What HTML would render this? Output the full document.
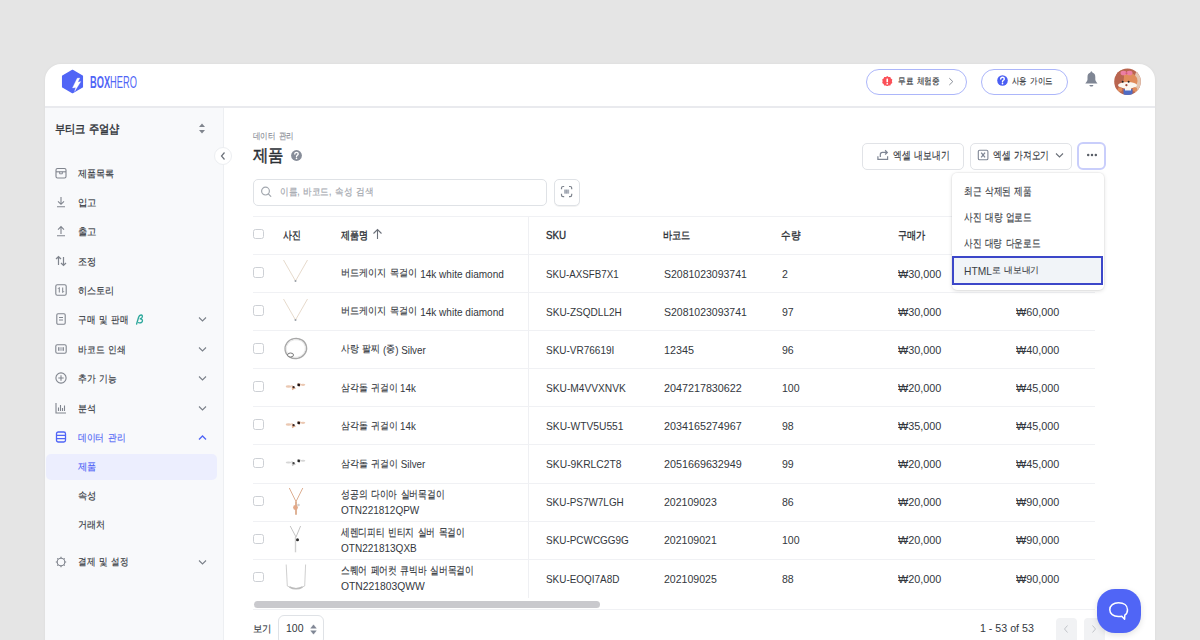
<!DOCTYPE html>
<html><head><meta charset="utf-8">
<style>
*{box-sizing:border-box;margin:0;padding:0}
html,body{width:1200px;height:640px;overflow:hidden;background:#e5e5e5;font-family:"Liberation Sans",sans-serif;color:#2f3338;position:relative}
.a{position:absolute}
.t{position:absolute;white-space:nowrap;line-height:16px;height:16px}
.pill{position:absolute;top:69px;height:26px;border:1.3px solid #acb6fa;border-radius:13px;background:#fff}
.btn{position:absolute;border:1px solid #e1e3e7;border-radius:5px;background:#fff}
.cb{position:absolute;width:10.5px;height:10.5px;border:1.3px solid #cdd0d5;border-radius:2.5px;background:#fff}
.hl{position:absolute;height:1px;background:#f0f1f4}
body.tofu .h{font-size:1.3em;position:relative;top:0.6px}
body.tofu .k{font-size:1.2em;top:0.4px}
.kk{-webkit-text-stroke:0.15px currentColor;word-spacing:1.5px;position:relative;top:-0.9px}
.k{font-size:0.9em;position:relative;top:-1.5px;-webkit-text-stroke:0.12px currentColor;word-spacing:1px}
</style></head><body>
<div class="a" style="left:45px;top:64px;width:1110px;height:620px;background:#fff;border-radius:16px;box-shadow:0 0 3px rgba(0,0,0,0.05)"></div>
<div class="a" style="left:45px;top:106px;width:1110px;height:2px;background:#e9eaee"></div>
<div class="a" style="left:45px;top:108px;width:179px;height:540px;background:#f8f9fb;border-right:1px solid #edeff2"></div>
<svg class="a" style="left:61px;top:69px" width="23" height="25" viewBox="0 0 23 25">
<polygon points="11.5,1.4 21.3,7.1 21.3,17.9 11.5,23.6 1.7,17.9 1.7,7.1" fill="#5065f6" stroke="#5065f6" stroke-linejoin="round" stroke-width="1.5"/>
<path d="M16.2 9.2 L18.8 9.0 L16.8 13.3 L19.8 12.6 L13.6 22.4 L14.7 18.4 L11.5 18.9 Z" fill="#fff" stroke="#fff" stroke-width="0.3" stroke-linejoin="round"/>
</svg>
<div class="t" style="left:90px;top:73.5px;font-size:17px;line-height:17px;height:17px;font-weight:bold;color:#5065f6;transform:scaleX(0.545);transform-origin:left top">BOX<span style="font-weight:normal">HERO</span></div>
<div class="pill" style="left:866px;width:101px"></div>
<svg class="a" style="left:882px;top:75.8px" width="10.5" height="10.5" viewBox="0 0 10.5 10.5"><polygon points="5.25,0 6.5,0.9 8.3,1 8.9,2.6 10.3,3.6 9.9,5.25 10.3,6.9 8.9,7.9 8.3,9.5 6.5,9.6 5.25,10.5 4,9.6 2.2,9.5 1.6,7.9 0.2,6.9 0.6,5.25 0.2,3.6 1.6,2.6 2.2,1 4,0.9" fill="#fb5058"/><rect x="4.45" y="2.6" width="1.6" height="3.6" rx="0.5" fill="#fff"/><rect x="4.45" y="7" width="1.6" height="1.4" rx="0.5" fill="#fff"/></svg>
<div class="t" id="k1" style="left:897.5px;top:74px;font-size:8.8px;color:#33373d;font-weight:normal;transform:scaleX(0.8437);transform-origin:left center;"><span><span class="kk h">무료 체험중</span></span></div>
<svg class="a" style="left:947px;top:77px" width="8" height="10" viewBox="0 0 8 10"><path d="M2.3 1.2 L5.8 4.6 L2.3 8" fill="none" stroke="#8a8f98" stroke-width="1"/></svg>
<div class="pill" style="left:981px;width:87px"></div>
<svg class="a" style="left:996.5px;top:75px" width="11" height="11" viewBox="0 0 11 11"><circle cx="5.5" cy="5.5" r="5.3" fill="#4a5ef3"/><path d="M3.7 4.1 C3.7 2.9 4.5 2.3 5.5 2.3 C6.6 2.3 7.3 3 7.3 3.9 C7.3 4.8 6.6 5.1 6.1 5.5 C5.6 5.9 5.5 6.2 5.5 6.9" fill="none" stroke="#fff" stroke-width="1.4" stroke-linecap="round"/><circle cx="5.5" cy="8.6" r="0.85" fill="#fff"/></svg>
<div class="t" id="k2" style="left:1012px;top:74px;font-size:8.8px;color:#33373d;font-weight:normal;transform:scaleX(0.8273);transform-origin:left center;"><span><span class="kk h">사용 가이드</span></span></div>
<svg class="a" style="left:1084px;top:70px" width="15" height="17" viewBox="0 0 15 17"><path d="M7.4 1.3 C6.8 1.3 6.6 2.2 6.4 2.6 C4.5 3.2 3.5 4.8 3.5 7 L3.5 9.5 C3.5 11 2.2 12.3 1.3 13.6 L13.5 13.6 C12.6 12.3 11.3 11 11.3 9.5 L11.3 7 C11.3 4.8 10.3 3.2 8.4 2.6 C8.2 2.2 8 1.3 7.4 1.3 Z" fill="#7f8694"/><path d="M5.4 15 L9.4 15 C9.2 16 8.4 16.6 7.4 16.6 C6.4 16.6 5.6 16 5.4 15 Z" fill="#7f8694"/></svg>
<svg class="a" style="left:1114px;top:68px" width="28" height="28" viewBox="0 0 28 28">
<defs><clipPath id="cc"><circle cx="13.5" cy="13.7" r="13.3"/></clipPath></defs>
<g clip-path="url(#cc)">
<rect width="28" height="28" fill="#b9654f"/>
<ellipse cx="25" cy="15" rx="5" ry="13" fill="#e3c6b2"/>
<ellipse cx="14" cy="13" rx="9.5" ry="8.5" fill="#e08c5c"/>
<ellipse cx="6" cy="9" rx="4" ry="7" fill="#b9654f"/>
<ellipse cx="13.5" cy="17.3" rx="9.5" ry="3.2" fill="#fbf6f0"/>
<circle cx="8.7" cy="13.8" r="1" fill="#222"/><circle cx="14.6" cy="13.8" r="1" fill="#222"/>
<circle cx="12.4" cy="17.2" r="1.1" fill="#a04838"/>
<rect x="9.5" y="21" width="9" height="8" fill="#4f6cc4"/>
<rect x="11" y="20" width="6" height="2.5" fill="#fbf6f0"/>
<circle cx="6" cy="21.5" r="2.3" fill="#e08c5c"/><circle cx="21" cy="21.5" r="2.3" fill="#e08c5c"/>
<ellipse cx="9.5" cy="5" rx="3" ry="2.3" fill="#ec7ea2"/><ellipse cx="15.5" cy="5" rx="3" ry="2.3" fill="#ec7ea2"/>
<circle cx="12.5" cy="5.2" r="1" fill="#d05a80"/>
</g></svg>
<div class="t" id="k3" style="left:54.5px;top:121px;font-size:12px;color:#2b2f35;font-weight:500;transform:scaleX(0.8534);transform-origin:left center;-webkit-text-stroke:0.4px #2b2f35"><span><span class="h">부티크 주얼샵</span></span></div>
<svg class="a" style="left:198px;top:123px" width="8" height="11" viewBox="0 0 8 11"><path d="M4 0.5 L7 4 L1 4 Z M4 10.5 L7 7 L1 7 Z" fill="#80858e"/></svg>
<div class="a" style="left:214px;top:147px;width:18px;height:18px;border-radius:9px;background:#fff;border:1px solid #eceef1"></div>
<svg class="a" style="left:219px;top:151px" width="8" height="10" viewBox="0 0 8 10"><path d="M5.5 1.5 L2.5 5 L5.5 8.5" fill="none" stroke="#6b7079" stroke-width="1.2"/></svg>
<svg class="a" style="left:54.5px;top:167px" width="12" height="12" viewBox="0 0 12 12"><rect x="1" y="1.5" width="10" height="9.5" rx="1.5" fill="none" stroke="#80858e" stroke-width="1.1"/><path d="M1 4.8 L11 4.8" stroke="#80858e" stroke-width="1.1"/><path d="M4.6 4.8 L4.6 6.8 L7.4 6.8 L7.4 4.8" fill="none" stroke="#80858e" stroke-width="0.9"/></svg>
<div class="t" id="k4" style="left:78px;top:166.5px;font-size:10px;color:#33373d;font-weight:normal;transform:scaleX(0.9075);transform-origin:left center;"><span><span class="kk h">제품목록</span></span></div>
<svg class="a" style="left:54.5px;top:196px" width="12" height="12" viewBox="0 0 12 12"><path d="M6 1 L6 8.3 M3 5.3 L6 8.3 L9 5.3 M2 10.8 L10 10.8" fill="none" stroke="#80858e" stroke-width="1.1"/></svg>
<div class="t" id="k5" style="left:78px;top:195.5px;font-size:10px;color:#33373d;font-weight:normal;transform:scaleX(0.9400);transform-origin:left center;"><span><span class="kk h">입고</span></span></div>
<svg class="a" style="left:54.5px;top:225px" width="12" height="12" viewBox="0 0 12 12"><path d="M6 9 L6 1.6 M3 4.6 L6 1.6 L9 4.6 M2 10.8 L10 10.8" fill="none" stroke="#80858e" stroke-width="1.1"/></svg>
<div class="t" id="k6" style="left:78px;top:224.5px;font-size:10px;color:#33373d;font-weight:normal;transform:scaleX(0.9400);transform-origin:left center;"><span><span class="kk h">출고</span></span></div>
<svg class="a" style="left:54.5px;top:255px" width="12" height="12" viewBox="0 0 12 12"><path d="M3.5 10 L3.5 1.5 M1 4 L3.5 1.5 L6 4 M8.5 2 L8.5 10.5 M6 8 L8.5 10.5 L11 8" fill="none" stroke="#80858e" stroke-width="1.2"/></svg>
<div class="t" id="k7" style="left:78px;top:254.5px;font-size:10px;color:#33373d;font-weight:normal;transform:scaleX(0.9150);transform-origin:left center;"><span><span class="kk h">조정</span></span></div>
<svg class="a" style="left:54.5px;top:284px" width="12" height="12" viewBox="0 0 12 12"><rect x="0.8" y="0.8" width="10.4" height="10.4" rx="1.5" fill="none" stroke="#80858e" stroke-width="1.1"/><path d="M4.3 8.5 L4.3 3.5 M3 4.8 L4.3 3.5 M7.7 3.5 L7.7 8.5 L9 7.2" fill="none" stroke="#80858e" stroke-width="1"/></svg>
<div class="t" id="k8" style="left:78px;top:283.5px;font-size:10px;color:#33373d;font-weight:normal;transform:scaleX(0.9075);transform-origin:left center;"><span><span class="kk h">히스토리</span></span></div>
<svg class="a" style="left:54.5px;top:313px" width="12" height="12" viewBox="0 0 12 12"><rect x="1.8" y="0.8" width="8.4" height="10.4" rx="1.2" fill="none" stroke="#80858e" stroke-width="1.1"/><path d="M4 4.5 L8 4.5 M4 7 L8 7" stroke="#80858e" stroke-width="1"/></svg>
<div class="t" id="k9" style="left:78px;top:312.5px;font-size:10px;color:#33373d;font-weight:normal;transform:scaleX(0.8555);transform-origin:left center;"><span><span class="kk h">구매 및 판매</span></span></div>
<svg class="a" style="left:198px;top:316.2px" width="9" height="7" viewBox="0 0 9 7"><path d="M1 1.5 L4.5 5 L8 1.5" fill="none" stroke="#7b8089" stroke-width="1.1"/></svg>
<svg class="a" style="left:54.5px;top:343px" width="12" height="12" viewBox="0 0 12 12"><rect x="0.8" y="1.8" width="10.4" height="8.4" rx="1.5" fill="none" stroke="#80858e" stroke-width="1.1"/><path d="M3.5 4.2 L3.5 7.8 M5 4.2 L5 7.8 M7 4.2 L7 7.8 M8.5 4.2 L8.5 7.8" stroke="#80858e" stroke-width="0.9"/></svg>
<div class="t" id="k10" style="left:78px;top:342.5px;font-size:10px;color:#33373d;font-weight:normal;transform:scaleX(0.8806);transform-origin:left center;"><span><span class="kk h">바코드 인쇄</span></span></div>
<svg class="a" style="left:198px;top:346.2px" width="9" height="7" viewBox="0 0 9 7"><path d="M1 1.5 L4.5 5 L8 1.5" fill="none" stroke="#7b8089" stroke-width="1.1"/></svg>
<svg class="a" style="left:54.5px;top:372px" width="12" height="12" viewBox="0 0 12 12"><circle cx="6" cy="6" r="5.1" fill="none" stroke="#80858e" stroke-width="1.1"/><path d="M6 3.3 L6 8.7 M3.3 6 L8.7 6" stroke="#80858e" stroke-width="1.1"/></svg>
<div class="t" id="k11" style="left:78px;top:371.5px;font-size:10px;color:#33373d;font-weight:normal;transform:scaleX(0.8762);transform-origin:left center;"><span><span class="kk h">추가 기능</span></span></div>
<svg class="a" style="left:198px;top:375.2px" width="9" height="7" viewBox="0 0 9 7"><path d="M1 1.5 L4.5 5 L8 1.5" fill="none" stroke="#7b8089" stroke-width="1.1"/></svg>
<svg class="a" style="left:54.5px;top:402px" width="12" height="12" viewBox="0 0 12 12"><path d="M1 1 L1 11 L11 11 M3.5 9 L3.5 5.5 M5.5 9 L5.5 3 M7.5 9 L7.5 6 M9.5 9 L9.5 3.5" fill="none" stroke="#80858e" stroke-width="1.1"/></svg>
<div class="t" id="k12" style="left:78px;top:401.5px;font-size:10px;color:#33373d;font-weight:normal;transform:scaleX(0.9000);transform-origin:left center;"><span><span class="kk h">분석</span></span></div>
<svg class="a" style="left:198px;top:405.2px" width="9" height="7" viewBox="0 0 9 7"><path d="M1 1.5 L4.5 5 L8 1.5" fill="none" stroke="#7b8089" stroke-width="1.1"/></svg>
<svg class="a" style="left:54.5px;top:431px" width="12" height="12" viewBox="0 0 12 12"><rect x="1.5" y="1" width="9" height="10" rx="1.8" fill="none" stroke="#5065f6" stroke-width="1.3"/><path d="M1.5 4.3 L10.5 4.3 M1.5 7.6 L10.5 7.6" stroke="#5065f6" stroke-width="1.3"/></svg>
<div class="t" id="k13" style="left:78px;top:430.5px;font-size:10px;color:#5065f6;font-weight:normal;transform:scaleX(0.8714);transform-origin:left center;"><span><span class="kk h">데이터 관리</span></span></div>
<svg class="a" style="left:198px;top:434px" width="9" height="7" viewBox="0 0 9 7"><path d="M1 5.5 L4.5 2 L8 5.5" fill="none" stroke="#5065f6" stroke-width="1.3"/></svg>
<svg class="a" style="left:54.5px;top:555.5px" width="12" height="12" viewBox="0 0 12 12"><circle cx="6" cy="6" r="3.8" fill="none" stroke="#80858e" stroke-width="1.1"/><path d="M6 0.8 L6 2.2 M6 9.8 L6 11.2 M0.8 6 L2.2 6 M9.8 6 L11.2 6 M2.3 2.3 L3.3 3.3 M8.7 8.7 L9.7 9.7 M2.3 9.7 L3.3 8.7 M8.7 3.3 L9.7 2.3" stroke="#80858e" stroke-width="1.2"/></svg>
<div class="t" id="k14" style="left:78px;top:555.0px;font-size:10px;color:#33373d;font-weight:normal;transform:scaleX(0.8589);transform-origin:left center;"><span><span class="kk h">결제 및 설정</span></span></div>
<svg class="a" style="left:198px;top:558.7px" width="9" height="7" viewBox="0 0 9 7"><path d="M1 1.5 L4.5 5 L8 1.5" fill="none" stroke="#7b8089" stroke-width="1.1"/></svg>
<svg class="a" style="left:135px;top:313.5px" width="10" height="11" viewBox="0 0 10 11"><path d="M1.6 10 L3.6 3.2 C4.1 1.5 5.2 0.9 6.3 1 C7.6 1.2 7.8 2.8 6.6 4 L5.2 4.9 C7 5 7.8 6 7.3 7.4 C6.8 8.8 5.2 9.2 3.6 8.6" fill="none" stroke="#2ea89c" stroke-width="1.35" stroke-linecap="round" stroke-linejoin="round"/></svg>
<div class="a" style="left:46px;top:454px;width:171px;height:26px;border-radius:5px;background:#eceefe"></div>
<div class="t" id="k15" style="left:78px;top:459.8px;font-size:10px;color:#5065f6;font-weight:normal;transform:scaleX(0.9200);transform-origin:left center;"><span><span class="kk h">제품</span></span></div>
<div class="t" id="k16" style="left:78px;top:488.8px;font-size:10px;color:#33373d;font-weight:normal;transform:scaleX(0.9200);transform-origin:left center;"><span><span class="kk h">속성</span></span></div>
<div class="t" id="k17" style="left:78px;top:518.2px;font-size:10px;color:#33373d;font-weight:normal;transform:scaleX(0.9000);transform-origin:left center;"><span><span class="kk h">거래처</span></span></div>
<div class="t" id="k18" style="left:252.6px;top:129px;font-size:9px;color:#8b9098;font-weight:normal;transform:scaleX(0.8324);transform-origin:left center;"><span><span class="kk h">데이터 관리</span></span></div>
<div class="t" id="k19" style="left:252.6px;top:147.5px;font-size:17px;color:#2b2f35;font-weight:500;transform:scaleX(0.9059);transform-origin:left center;line-height:20px;height:20px;top:145.5px;-webkit-text-stroke:0.5px #2b2f35"><span><span class="h">제품</span></span></div>
<svg class="a" style="left:290.8px;top:150.2px" width="11" height="11" viewBox="0 0 11 11"><circle cx="5.5" cy="5.5" r="5.4" fill="#878d99"/><path d="M3.8 4.1 C3.8 3 4.6 2.4 5.5 2.4 C6.5 2.4 7.2 3 7.2 3.9 C7.2 4.7 6.6 5 6.1 5.4 C5.6 5.8 5.5 6.1 5.5 6.8" fill="none" stroke="#fff" stroke-width="1.3" stroke-linecap="round"/><circle cx="5.5" cy="8.5" r="0.8" fill="#fff"/></svg>
<div class="btn" style="left:253px;top:179px;width:294px;height:27px;border-color:#dfe2e6"></div>
<svg class="a" style="left:260px;top:186px" width="13" height="13" viewBox="0 0 13 13"><circle cx="5.5" cy="5.1" r="3.9" fill="none" stroke="#a3a8af" stroke-width="1.2"/><path d="M8.3 7.9 L10.8 10.4" stroke="#a3a8af" stroke-width="1.2" stroke-linecap="round"/></svg>
<div class="t" id="k20" style="left:279.6px;top:185px;font-size:10px;color:#a0a4ab;font-weight:normal;transform:scaleX(0.8597);transform-origin:left center;"><span><span class="kk h">이름, 바코드, 속성 검색</span></span></div>
<div class="btn" style="left:553.5px;top:179px;width:26.5px;height:26.5px;border-color:#dfe2e6;box-shadow:0 1px 0.5px rgba(0,0,0,0.05)"></div>
<svg class="a" style="left:560px;top:185px" width="14" height="13" viewBox="0 0 14 13"><path d="M1.5 4.2 L1.5 3 Q1.5 1.5 3 1.5 L4.2 1.5 M9 1.5 L10.2 1.5 Q11.7 1.5 11.7 3 L11.7 4.2 M11.7 8.8 L11.7 10 Q11.7 11.6 10.2 11.6 L9 11.6 M4.2 11.6 L3 11.6 Q1.5 11.6 1.5 10 L1.5 8.8" fill="none" stroke="#7c828c" stroke-width="1.2"/><rect x="4" y="4.6" width="5.2" height="4" fill="#c3c8d1"/><path d="M5.1 4.6 L5.1 8.6 M6.6 4.6 L6.6 8.6 M8.1 4.6 L8.1 8.6" stroke="#7f8591" stroke-width="0.6"/></svg>
<div class="btn" style="left:862px;top:143px;width:102px;height:27px"></div>
<svg class="a" style="left:876px;top:149px" width="13" height="13" viewBox="0 0 13 13"><path d="M1.9 7.2 L1.9 10.4 L11.6 10.4 L11.6 7.2" fill="none" stroke="#7f8694" stroke-width="1.2"/><path d="M4.3 8 L4.3 5.5 Q4.3 3.4 6.4 3.4 L11.2 3.4 M9.1 1.3 L11.3 3.4 L9.1 5.5" fill="none" stroke="#7f8694" stroke-width="1.2"/></svg>
<div class="t" id="k21" style="left:893px;top:147.8px;font-size:10.5px;color:#33373d;font-weight:normal;transform:scaleX(0.7995);transform-origin:left center;"><span><span class="kk h">엑셀 내보내기</span></span></div>
<div class="btn" style="left:970px;top:143px;width:102px;height:27px"></div>
<svg class="a" style="left:977px;top:149px" width="12" height="12" viewBox="0 0 12 12"><rect x="1.3" y="1.3" width="9.6" height="9.4" rx="1.3" fill="none" stroke="#7f8694" stroke-width="1.1"/><path d="M4.2 3.6 L8 8.4 M8 3.6 L4.2 8.4" stroke="#7f8694" stroke-width="1.3"/></svg>
<div class="t" id="k22" style="left:993.3px;top:147.8px;font-size:10.5px;color:#33373d;font-weight:normal;transform:scaleX(0.7952);transform-origin:left center;"><span><span class="kk h">엑셀 가져오기</span></span></div>
<svg class="a" style="left:1055px;top:152px" width="9" height="7" viewBox="0 0 9 7"><path d="M1 1.5 L4.5 5 L8 1.5" fill="none" stroke="#6b7079" stroke-width="1.1"/></svg>
<div class="btn" style="left:1077px;top:141.8px;width:28.5px;height:28.3px;border:2px solid #c9cefb;border-radius:6px"></div>
<svg class="a" style="left:1085.5px;top:152.6px" width="12" height="4" viewBox="0 0 12 4"><circle cx="2.2" cy="2" r="1.25" fill="#5a5f68"/><circle cx="6" cy="2" r="1.25" fill="#5a5f68"/><circle cx="9.8" cy="2" r="1.25" fill="#5a5f68"/></svg>
<div class="hl" style="left:253px;top:216px;width:842px"></div>
<div class="hl" style="left:253px;top:254px;width:842px"></div>
<div class="a" style="left:528px;top:217px;width:1px;height:381px;background:#eff0f3"></div>
<div class="cb" style="left:253.3px;top:228.5px"></div>
<div class="t" id="k23" style="left:282.5px;top:227px;font-size:10.5px;color:#2b2f35;font-weight:500;transform:scaleX(0.8091);transform-origin:left center;-webkit-text-stroke:0.35px #2b2f35"><span><span class="h">사진</span></span></div>
<div class="t" id="k24" style="left:340.75px;top:227px;font-size:10.5px;color:#2b2f35;font-weight:500;transform:scaleX(0.8197);transform-origin:left center;-webkit-text-stroke:0.35px #2b2f35"><span><span class="h">제품명</span></span></div>
<div class="t" id="k25" style="left:546.2px;top:227px;font-size:10.5px;color:#2b2f35;font-weight:500;transform:scaleX(0.9308);transform-origin:left center;-webkit-text-stroke:0.35px #2b2f35"><span>SKU</span></div>
<div class="t" id="k26" style="left:663.3px;top:227px;font-size:10.5px;color:#2b2f35;font-weight:500;transform:scaleX(0.8333);transform-origin:left center;-webkit-text-stroke:0.35px #2b2f35"><span><span class="h">바코드</span></span></div>
<div class="t" id="k27" style="left:780.7px;top:227px;font-size:10.5px;color:#2b2f35;font-weight:500;transform:scaleX(0.8682);transform-origin:left center;-webkit-text-stroke:0.35px #2b2f35"><span><span class="h">수량</span></span></div>
<div class="t" id="k28" style="left:898.3px;top:227px;font-size:10.5px;color:#2b2f35;font-weight:500;transform:scaleX(0.8333);transform-origin:left center;-webkit-text-stroke:0.35px #2b2f35"><span><span class="h">구매가</span></span></div>
<div class="t" id="k29" style="left:1016px;top:227px;font-size:10.5px;color:#2b2f35;font-weight:500;transform:scaleX(0.8333);transform-origin:left center;-webkit-text-stroke:0.35px #2b2f35"><span><span class="h">판매가</span></span></div>
<svg class="a" style="left:372px;top:228px" width="11" height="12" viewBox="0 0 11 12"><path d="M5.5 11 L5.5 1.5 M1.5 5.5 L5.5 1.5 L9.5 5.5" fill="none" stroke="#6b7079" stroke-width="1.1"/></svg>
<div class="hl" style="left:253px;top:292px;width:842px"></div>
<div class="cb" style="left:253.3px;top:267.0px"></div>
<svg class="a" style="left:283px;top:259.4px" width="26" height="26" viewBox="0 0 26 26"><path d="M0.5 1 L12.5 22 L24.5 1" fill="none" stroke="#e3d6c6" stroke-width="0.9"/><circle cx="12.5" cy="22" r="1" fill="#9aa0a8"/></svg>
<div class="t" id="k30" style="left:340.5px;top:265.7px;font-size:11px;color:#33373d;font-weight:normal;transform:scaleX(0.9119);transform-origin:left center;"><span><span class="k h">버드케이지 목걸이</span> 14k white diamond</span></div>
<div class="t" id="k31" style="left:546.3px;top:265.7px;font-size:11px;color:#33373d;font-weight:normal;transform:scaleX(0.8856);transform-origin:left center;"><span>SKU-AXSFB7X1</span></div>
<div class="t" id="k32" style="left:663.75px;top:265.7px;font-size:11px;color:#33373d;font-weight:normal;transform:scaleX(0.9531);transform-origin:left center;"><span>S2081023093741</span></div>
<div class="t" id="k33" style="left:781.5px;top:265.7px;font-size:11px;color:#33373d;font-weight:normal;transform:scaleX(0.9584);transform-origin:left center;"><span>2</span></div>
<div class="t" id="k34" style="left:898.3px;top:265.7px;font-size:11px;color:#33373d;font-weight:normal;transform:scaleX(0.9834);transform-origin:left center;"><span>₩30,000</span></div>
<div class="t" id="k35" style="left:1015.8px;top:265.7px;font-size:11px;color:#33373d;font-weight:normal;transform:scaleX(0.9834);transform-origin:left center;"><span>₩60,000</span></div>
<div class="hl" style="left:253px;top:330px;width:842px"></div>
<div class="cb" style="left:253.3px;top:305.1px"></div>
<svg class="a" style="left:283px;top:297.5px" width="26" height="26" viewBox="0 0 26 26"><path d="M0.5 1 L12.5 22 L24.5 1" fill="none" stroke="#e3d6c6" stroke-width="0.9"/><circle cx="12.5" cy="22" r="1" fill="#9aa0a8"/></svg>
<div class="t" id="k36" style="left:340.5px;top:303.8px;font-size:11px;color:#33373d;font-weight:normal;transform:scaleX(0.9119);transform-origin:left center;"><span><span class="k h">버드케이지 목걸이</span> 14k white diamond</span></div>
<div class="t" id="k37" style="left:546.3px;top:303.8px;font-size:11px;color:#33373d;font-weight:normal;transform:scaleX(0.9117);transform-origin:left center;"><span>SKU-ZSQDLL2H</span></div>
<div class="t" id="k38" style="left:663.75px;top:303.8px;font-size:11px;color:#33373d;font-weight:normal;transform:scaleX(0.9531);transform-origin:left center;"><span>S2081023093741</span></div>
<div class="t" id="k39" style="left:781.5px;top:303.8px;font-size:11px;color:#33373d;font-weight:normal;transform:scaleX(0.9584);transform-origin:left center;"><span>97</span></div>
<div class="t" id="k40" style="left:898.3px;top:303.8px;font-size:11px;color:#33373d;font-weight:normal;transform:scaleX(0.9834);transform-origin:left center;"><span>₩30,000</span></div>
<div class="t" id="k41" style="left:1015.8px;top:303.8px;font-size:11px;color:#33373d;font-weight:normal;transform:scaleX(0.9834);transform-origin:left center;"><span>₩60,000</span></div>
<div class="hl" style="left:253px;top:368px;width:842px"></div>
<div class="cb" style="left:253.3px;top:343.2px"></div>
<svg class="a" style="left:283px;top:335.6px" width="26" height="26" viewBox="0 0 26 26"><ellipse cx="12.8" cy="12.5" rx="10.8" ry="10" fill="none" stroke="#a8a8a8" stroke-width="1.4" transform="rotate(-10 12.8 12.5)"/><ellipse cx="12.8" cy="12.5" rx="9.6" ry="8.8" fill="none" stroke="#e4e4e4" stroke-width="0.8" transform="rotate(-10 12.8 12.5)"/><ellipse cx="7.5" cy="19" rx="3" ry="2" fill="#fff" stroke="#777" stroke-width="1"/></svg>
<div class="t" id="k42" style="left:340.5px;top:341.9px;font-size:11px;color:#33373d;font-weight:normal;transform:scaleX(0.8953);transform-origin:left center;"><span><span class="k h">사랑 팔찌</span> (<span class="k h">중</span>) Silver</span></div>
<div class="t" id="k43" style="left:546.3px;top:341.9px;font-size:11px;color:#33373d;font-weight:normal;transform:scaleX(0.9080);transform-origin:left center;"><span>SKU-VR76619I</span></div>
<div class="t" id="k44" style="left:663.75px;top:341.9px;font-size:11px;color:#33373d;font-weight:normal;transform:scaleX(0.9806);transform-origin:left center;"><span>12345</span></div>
<div class="t" id="k45" style="left:781.5px;top:341.9px;font-size:11px;color:#33373d;font-weight:normal;transform:scaleX(0.9584);transform-origin:left center;"><span>96</span></div>
<div class="t" id="k46" style="left:898.3px;top:341.9px;font-size:11px;color:#33373d;font-weight:normal;transform:scaleX(0.9834);transform-origin:left center;"><span>₩30,000</span></div>
<div class="t" id="k47" style="left:1015.8px;top:341.9px;font-size:11px;color:#33373d;font-weight:normal;transform:scaleX(0.9834);transform-origin:left center;"><span>₩40,000</span></div>
<div class="hl" style="left:253px;top:406px;width:842px"></div>
<div class="cb" style="left:253.3px;top:381.3px"></div>
<svg class="a" style="left:283px;top:373.70000000000005px" width="26" height="26" viewBox="0 0 26 26"><ellipse cx="5.5" cy="12.5" rx="2.8" ry="1.2" fill="#ebc8b2"/><polygon points="8.5,10.8 13,14.3 9,16.3" fill="#e3b497"/><circle cx="10.6" cy="13.2" r="1.1" fill="#3a2a2a"/><polygon points="14,9.3 18,9.8 16.5,13.3" fill="#e3b497"/><circle cx="15.7" cy="10.9" r="1.4" fill="#1e1414"/><ellipse cx="20" cy="10.8" rx="2.3" ry="1.1" fill="#ebc8b2"/></svg>
<div class="t" id="k48" style="left:340.5px;top:380.0px;font-size:11px;color:#33373d;font-weight:normal;transform:scaleX(0.8847);transform-origin:left center;"><span><span class="k h">삼각돌 귀걸이</span> 14k</span></div>
<div class="t" id="k49" style="left:546.3px;top:380.0px;font-size:11px;color:#33373d;font-weight:normal;transform:scaleX(0.9257);transform-origin:left center;"><span>SKU-M4VVXNVK</span></div>
<div class="t" id="k50" style="left:663.75px;top:380.0px;font-size:11px;color:#33373d;font-weight:normal;transform:scaleX(0.9782);transform-origin:left center;"><span>2047217830622</span></div>
<div class="t" id="k51" style="left:781.5px;top:380.0px;font-size:11px;color:#33373d;font-weight:normal;transform:scaleX(0.9584);transform-origin:left center;"><span>100</span></div>
<div class="t" id="k52" style="left:898.3px;top:380.0px;font-size:11px;color:#33373d;font-weight:normal;transform:scaleX(0.9834);transform-origin:left center;"><span>₩20,000</span></div>
<div class="t" id="k53" style="left:1015.8px;top:380.0px;font-size:11px;color:#33373d;font-weight:normal;transform:scaleX(0.9834);transform-origin:left center;"><span>₩45,000</span></div>
<div class="hl" style="left:253px;top:444px;width:842px"></div>
<div class="cb" style="left:253.3px;top:419.40000000000003px"></div>
<svg class="a" style="left:283px;top:411.8px" width="26" height="26" viewBox="0 0 26 26"><ellipse cx="5.5" cy="12.5" rx="2.8" ry="1.2" fill="#ebc8b2"/><polygon points="8.5,10.8 13,14.3 9,16.3" fill="#e3b497"/><circle cx="10.6" cy="13.2" r="1.1" fill="#3a2a2a"/><polygon points="14,9.3 18,9.8 16.5,13.3" fill="#e3b497"/><circle cx="15.7" cy="10.9" r="1.4" fill="#1e1414"/><ellipse cx="20" cy="10.8" rx="2.3" ry="1.1" fill="#ebc8b2"/></svg>
<div class="t" id="k54" style="left:340.5px;top:418.1px;font-size:11px;color:#33373d;font-weight:normal;transform:scaleX(0.8847);transform-origin:left center;"><span><span class="k h">삼각돌 귀걸이</span> 14k</span></div>
<div class="t" id="k55" style="left:546.3px;top:418.1px;font-size:11px;color:#33373d;font-weight:normal;transform:scaleX(0.9322);transform-origin:left center;"><span>SKU-WTV5U551</span></div>
<div class="t" id="k56" style="left:663.75px;top:418.1px;font-size:11px;color:#33373d;font-weight:normal;transform:scaleX(0.9782);transform-origin:left center;"><span>2034165274967</span></div>
<div class="t" id="k57" style="left:781.5px;top:418.1px;font-size:11px;color:#33373d;font-weight:normal;transform:scaleX(0.9584);transform-origin:left center;"><span>98</span></div>
<div class="t" id="k58" style="left:898.3px;top:418.1px;font-size:11px;color:#33373d;font-weight:normal;transform:scaleX(0.9834);transform-origin:left center;"><span>₩35,000</span></div>
<div class="t" id="k59" style="left:1015.8px;top:418.1px;font-size:11px;color:#33373d;font-weight:normal;transform:scaleX(0.9834);transform-origin:left center;"><span>₩45,000</span></div>
<div class="hl" style="left:253px;top:483px;width:842px"></div>
<div class="cb" style="left:253.3px;top:457.5px"></div>
<svg class="a" style="left:283px;top:449.9px" width="26" height="26" viewBox="0 0 26 26"><ellipse cx="5.5" cy="12.5" rx="2.8" ry="1.1" fill="#d6d6d6"/><polygon points="8.5,10.8 13,14.3 9,16.3" fill="#c8c8c8"/><circle cx="10.6" cy="13.2" r="1.1" fill="#444"/><polygon points="14,9.3 18,9.8 16.5,13.3" fill="#c8c8c8"/><circle cx="15.7" cy="10.9" r="1.3" fill="#222"/><ellipse cx="20" cy="10.8" rx="2.3" ry="1" fill="#d6d6d6"/></svg>
<div class="t" id="k60" style="left:340.5px;top:456.2px;font-size:11px;color:#33373d;font-weight:normal;transform:scaleX(0.8938);transform-origin:left center;"><span><span class="k h">삼각돌 귀걸이</span> Silver</span></div>
<div class="t" id="k61" style="left:546.3px;top:456.2px;font-size:11px;color:#33373d;font-weight:normal;transform:scaleX(0.9355);transform-origin:left center;"><span>SKU-9KRLC2T8</span></div>
<div class="t" id="k62" style="left:663.75px;top:456.2px;font-size:11px;color:#33373d;font-weight:normal;transform:scaleX(0.9782);transform-origin:left center;"><span>2051669632949</span></div>
<div class="t" id="k63" style="left:781.5px;top:456.2px;font-size:11px;color:#33373d;font-weight:normal;transform:scaleX(0.9584);transform-origin:left center;"><span>99</span></div>
<div class="t" id="k64" style="left:898.3px;top:456.2px;font-size:11px;color:#33373d;font-weight:normal;transform:scaleX(0.9834);transform-origin:left center;"><span>₩20,000</span></div>
<div class="t" id="k65" style="left:1015.8px;top:456.2px;font-size:11px;color:#33373d;font-weight:normal;transform:scaleX(0.9834);transform-origin:left center;"><span>₩45,000</span></div>
<div class="hl" style="left:253px;top:521px;width:842px"></div>
<div class="cb" style="left:253.3px;top:495.6px"></div>
<svg class="a" style="left:283px;top:485.0px" width="26" height="32" viewBox="0 0 26 32"><path d="M6.3 3 L13 16.6 L19.8 3" fill="none" stroke="#d9a585" stroke-width="0.9"/><path d="M13 16.6 L13 29.8" stroke="#d49a75" stroke-width="1.5"/><circle cx="12.5" cy="22.5" r="2.4" fill="#e2a888"/><circle cx="15.5" cy="20" r="1.3" fill="#d0d0d0"/></svg>
<div class="t" id="k66" style="left:340.5px;top:486.5px;font-size:10.5px;color:#33373d;font-weight:normal;transform:scaleX(0.7971);transform-origin:left center;"><span><span class="kk h">성공의 다이아 실버목걸이</span></span></div>
<div class="t" id="k67" style="left:340.5px;top:501.8px;font-size:11px;color:#33373d;font-weight:normal;transform:scaleX(0.9083);transform-origin:left center;"><span>OTN221812QPW</span></div>
<div class="t" id="k68" style="left:546.3px;top:494.3px;font-size:11px;color:#33373d;font-weight:normal;transform:scaleX(0.9025);transform-origin:left center;"><span>SKU-PS7W7LGH</span></div>
<div class="t" id="k69" style="left:663.75px;top:494.3px;font-size:11px;color:#33373d;font-weight:normal;transform:scaleX(0.9584);transform-origin:left center;"><span>202109023</span></div>
<div class="t" id="k70" style="left:781.5px;top:494.3px;font-size:11px;color:#33373d;font-weight:normal;transform:scaleX(0.9584);transform-origin:left center;"><span>86</span></div>
<div class="t" id="k71" style="left:898.3px;top:494.3px;font-size:11px;color:#33373d;font-weight:normal;transform:scaleX(0.9834);transform-origin:left center;"><span>₩20,000</span></div>
<div class="t" id="k72" style="left:1015.8px;top:494.3px;font-size:11px;color:#33373d;font-weight:normal;transform:scaleX(0.9834);transform-origin:left center;"><span>₩90,000</span></div>
<div class="hl" style="left:253px;top:559px;width:842px"></div>
<div class="cb" style="left:253.3px;top:533.6999999999999px"></div>
<svg class="a" style="left:283px;top:523.1px" width="26" height="32" viewBox="0 0 26 32"><path d="M7.2 3 L13 14 L17.6 3" fill="none" stroke="#bdbdbd" stroke-width="0.9"/><path d="M12.5 14 L12.5 29.3" stroke="#cfcfcf" stroke-width="1.4"/><circle cx="14.5" cy="16.7" r="1.5" fill="#2a2a2a"/></svg>
<div class="t" id="k73" style="left:340.5px;top:524.6px;font-size:10.5px;color:#33373d;font-weight:normal;transform:scaleX(0.7922);transform-origin:left center;"><span><span class="kk h">세렌디피티 빈티지 실버 목걸이</span></span></div>
<div class="t" id="k74" style="left:340.5px;top:539.9px;font-size:11px;color:#33373d;font-weight:normal;transform:scaleX(0.9115);transform-origin:left center;"><span>OTN221813QXB</span></div>
<div class="t" id="k75" style="left:546.3px;top:532.4px;font-size:11px;color:#33373d;font-weight:normal;transform:scaleX(0.9031);transform-origin:left center;"><span>SKU-PCWCGG9G</span></div>
<div class="t" id="k76" style="left:663.75px;top:532.4px;font-size:11px;color:#33373d;font-weight:normal;transform:scaleX(0.9584);transform-origin:left center;"><span>202109021</span></div>
<div class="t" id="k77" style="left:781.5px;top:532.4px;font-size:11px;color:#33373d;font-weight:normal;transform:scaleX(0.9584);transform-origin:left center;"><span>100</span></div>
<div class="t" id="k78" style="left:898.3px;top:532.4px;font-size:11px;color:#33373d;font-weight:normal;transform:scaleX(0.9834);transform-origin:left center;"><span>₩20,000</span></div>
<div class="t" id="k79" style="left:1015.8px;top:532.4px;font-size:11px;color:#33373d;font-weight:normal;transform:scaleX(0.9834);transform-origin:left center;"><span>₩90,000</span></div>
<div class="cb" style="left:253.3px;top:571.8px"></div>
<svg class="a" style="left:283px;top:559.7px" width="26" height="32" viewBox="0 0 26 32"><path d="M3.2 4.5 L4.3 26 Q13 31 21.7 26 L22.6 4.5" fill="none" stroke="#c9c9c9" stroke-width="0.9"/><path d="M6.5 27 Q13 30.5 19.5 27" fill="none" stroke="#bcbcbc" stroke-width="1.6"/></svg>
<div class="t" id="k80" style="left:340.5px;top:562.7px;font-size:10.5px;color:#33373d;font-weight:normal;transform:scaleX(0.7939);transform-origin:left center;"><span><span class="kk h">스퀘어 페어컷 큐빅바 실버목걸이</span></span></div>
<div class="t" id="k81" style="left:340.5px;top:578.0px;font-size:11px;color:#33373d;font-weight:normal;transform:scaleX(0.9389);transform-origin:left center;"><span>OTN221803QWW</span></div>
<div class="t" id="k82" style="left:546.3px;top:570.5px;font-size:11px;color:#33373d;font-weight:normal;transform:scaleX(0.9027);transform-origin:left center;"><span>SKU-EOQI7A8D</span></div>
<div class="t" id="k83" style="left:663.75px;top:570.5px;font-size:11px;color:#33373d;font-weight:normal;transform:scaleX(0.9584);transform-origin:left center;"><span>202109025</span></div>
<div class="t" id="k84" style="left:781.5px;top:570.5px;font-size:11px;color:#33373d;font-weight:normal;transform:scaleX(0.9584);transform-origin:left center;"><span>88</span></div>
<div class="t" id="k85" style="left:898.3px;top:570.5px;font-size:11px;color:#33373d;font-weight:normal;transform:scaleX(0.9834);transform-origin:left center;"><span>₩20,000</span></div>
<div class="t" id="k86" style="left:1015.8px;top:570.5px;font-size:11px;color:#33373d;font-weight:normal;transform:scaleX(0.9834);transform-origin:left center;"><span>₩90,000</span></div>
<div class="a" style="left:254px;top:601px;width:346px;height:7px;border-radius:4px;background:#c9c9cd"></div>
<div class="hl" style="left:253px;top:609px;width:842px"></div>
<div class="t" id="k87" style="left:252.7px;top:621.6px;font-size:10px;color:#33373d;font-weight:normal;transform:scaleX(0.9400);transform-origin:left center;"><span><span class="kk h">보기</span></span></div>
<div class="btn" style="left:278px;top:615.2px;width:45.5px;height:30px;border-color:#dfe2e6;border-radius:6px"></div>
<div class="t" id="k88" style="left:285.5px;top:620.2px;font-size:10.5px;color:#33373d;font-weight:normal;transform:scaleX(0.9982);transform-origin:left center;"><span>100</span></div>
<svg class="a" style="left:309.5px;top:623.5px" width="7" height="11" viewBox="0 0 7 11"><path d="M3.5 0.8 L6.3 4.3 L0.7 4.3 Z M3.5 10.2 L6.3 6.7 L0.7 6.7 Z" fill="#7f8694" stroke="#7f8694" stroke-width="0.4" stroke-linejoin="round"/></svg>
<div class="t" id="k89" style="left:980px;top:620px;font-size:11px;color:#33373d;font-weight:normal;transform:scaleX(0.9666);transform-origin:left center;"><span>1 - 53 of 53</span></div>
<div class="a" style="left:1056px;top:618px;width:21px;height:26px;border-radius:4px;background:#f1f2f4"></div>
<div class="a" style="left:1084px;top:618px;width:21px;height:26px;border-radius:4px;background:#f1f2f4"></div>
<svg class="a" style="left:1062px;top:624px" width="8" height="10" viewBox="0 0 8 10"><path d="M5.5 1.5 L2.5 5 L5.5 8.5" fill="none" stroke="#c2c5ca" stroke-width="1"/></svg>
<svg class="a" style="left:1090px;top:624px" width="8" height="10" viewBox="0 0 8 10"><path d="M2.5 1.5 L5.5 5 L2.5 8.5" fill="none" stroke="#c2c5ca" stroke-width="1"/></svg>
<div class="a" style="left:952px;top:172.5px;width:152px;height:117px;border-radius:5px;background:#fff;box-shadow:0 1px 4px rgba(0,0,0,0.13),0 0 0 1px rgba(0,0,0,0.03)"></div>
<div class="t" id="k90" style="left:963.7px;top:183.5px;font-size:10.5px;color:#3a3e45;font-weight:normal;transform:scaleX(0.7898);transform-origin:left center;"><span><span class="kk h">최근 삭제된 제품</span></span></div>
<div class="t" id="k91" style="left:963.7px;top:209.5px;font-size:10.5px;color:#3a3e45;font-weight:normal;transform:scaleX(0.7898);transform-origin:left center;"><span><span class="kk h">사진 대량 업로드</span></span></div>
<div class="t" id="k92" style="left:963.7px;top:236px;font-size:10.5px;color:#3a3e45;font-weight:normal;transform:scaleX(0.7879);transform-origin:left center;"><span><span class="kk h">사진 대량 다운로드</span></span></div>
<div class="a" style="left:952px;top:256px;width:151px;height:29px;background:#f1f4f8;border:2px solid #3c47c9"></div>
<div class="t" id="k93" style="left:963.7px;top:262.5px;font-size:10.5px;color:#3a3e45;font-weight:normal;transform:scaleX(0.9739);transform-origin:left center;"><span>HTML<span class="k h">로 내보내기</span></span></div>
<div class="a" style="left:1097px;top:589px;width:44px;height:44px;border-radius:18px;background:#5065f6;box-shadow:0 2px 6px rgba(0,0,0,0.12)"></div>
<svg class="a" style="left:1106px;top:598px" width="26" height="26" viewBox="0 0 26 26"><path d="M12.5 4.8 C7.5 4.8 3.8 7.5 3.8 11.8 C3.8 15.8 7.3 18.5 12.3 18.5 C13.5 18.5 14.8 18.4 15.8 18.2 L18.6 21.2 L18.8 17.2 C20.6 16 21.5 14 21.5 11.8 C21.5 7.5 17.8 4.8 12.5 4.8 Z" fill="none" stroke="#fff" stroke-width="1.5" stroke-linejoin="round"/></svg>
<script>(function(){var t=document.createElement("span");t.style.cssText="position:absolute;left:0;top:0;font-size:100px;white-space:nowrap;visibility:hidden";t.textContent="\uac00\uac00\uac00\uac00";document.body.appendChild(t);if(t.getBoundingClientRect().width<350)document.body.className="tofu";document.body.removeChild(t);var W={"k1":40.5,"k2":39.7,"k3":63.5,"k4":35.5,"k5":18,"k6":18,"k7":17.5,"k8":35.5,"k9":49.3,"k10":47,"k11":38,"k12":17.2,"k13":46.5,"k14":49.5,"k15":17.6,"k16":17.6,"k17":26.2,"k18":40,"k19":30,"k20":92.4,"k21":55.5,"k22":55.2,"k23":17,"k24":26.25,"k25":19.3,"k26":26.7,"k27":18.3,"k28":26.7,"k29":26.7,"k30":162,"k31":71.75,"k32":82,"k34":42.5,"k35":42.5,"k36":162,"k37":75,"k38":82,"k40":42.5,"k41":42.5,"k42":84,"k43":67.5,"k44":29.2,"k46":42.5,"k47":42.5,"k48":74,"k49":79,"k50":77,"k52":42.5,"k53":42.5,"k54":74,"k55":76.7,"k56":77,"k58":42.5,"k59":42.5,"k60":83.5,"k61":74.7,"k62":77,"k64":42.5,"k65":42.5,"k66":102.7,"k67":77.5,"k68":77,"k71":42.5,"k72":42.5,"k73":123,"k74":75,"k75":82,"k78":42.5,"k79":42.5,"k80":132,"k81":83,"k82":72.6,"k85":42.5,"k86":42.5,"k87":18,"k88":16.7,"k89":53,"k90":67,"k91":67,"k92":75.5,"k93":74.4};for(var k in W){var e=document.getElementById(k);if(!e)continue;var s=e.firstChild;e.style.transform="none";var w=s.getBoundingClientRect().width;if(w>1){e.style.transform="scaleX("+((W[k]+0.8)/w).toFixed(4)+")";e.style.transformOrigin="left center";}}})();</script>
</body></html>
